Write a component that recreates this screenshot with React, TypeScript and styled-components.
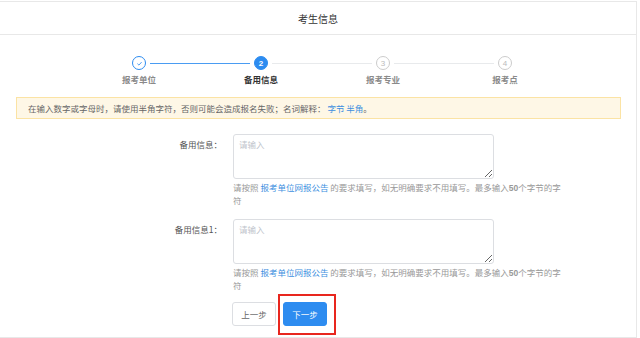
import React from "react";
import styled, { createGlobalStyle } from "styled-components";

const GlobalStyle = createGlobalStyle`
  html, body {
    margin: 0;
    padding: 0;
    background: #fff;
  }
  body {
    font-family: "Noto Sans CJK SC", "Noto Sans", "Liberation Sans", sans-serif;
    color: #515a6e;
  }
`;

const Page = styled.div`
  width: 636px;
  margin-top: 1px;
  border-top: 1px solid #e8e8e8;
  border-right: 1px solid #e8e8e8;
  border-bottom: 1px solid #e8e8e8;
  padding-bottom: 11px;
`;

const Header = styled.div`
  height: 32px;
  display: flex;
  align-items: center;
  justify-content: center;
  border-bottom: 1px solid #e8e8e8;
  font-size: 10px;
  color: #333;
`;

const Steps = styled.div`
  display: grid;
  grid-template-columns: repeat(4, 122px);
  margin: 21px 0 0 78px;
`;

const Step = styled.div<{ $line?: "done" | "todo" }>`
  position: relative;
  display: flex;
  flex-direction: column;
  align-items: center;

  &::after {
    content: "";
    display: ${(p) => (p.$line ? "block" : "none")};
    position: absolute;
    top: 7px;
    left: calc(50% + 11px);
    width: calc(100% - 22px);
    height: 1px;
    background: ${(p) => (p.$line === "done" ? "#4a9cf2" : "#e8eaec")};
  }
`;

const Circle = styled.div<{ $state: "done" | "active" | "wait" }>`
  width: 14px;
  height: 14px;
  box-sizing: border-box;
  border-radius: 50%;
  display: flex;
  align-items: center;
  justify-content: center;
  font-size: 8px;
  font-family: "Liberation Sans", sans-serif;
  font-weight: ${(p) => (p.$state === "active" ? 700 : 400)};
  border: 1px solid
    ${(p) => (p.$state === "wait" ? "#ccc" : "#2d8cf0")};
  background: ${(p) => (p.$state === "active" ? "#2d8cf0" : "#fff")};
  color: ${(p) =>
    p.$state === "active" ? "#fff" : p.$state === "done" ? "#2d8cf0" : "#bbb"};
`;

const StepLabel = styled.div<{ $active?: boolean }>`
  margin-top: 3px;
  font-size: 8.5px;
  line-height: 12px;
  font-weight: 700;
  color: ${(p) => (p.$active ? "#333" : "#8a8a8a")};
`;

const Alert = styled.div`
  margin: 12px 15px 0 16px;
  height: 22px;
  box-sizing: border-box;
  display: flex;
  align-items: center;
  padding-left: 11px;
  background: #fef7e6;
  border: 1px solid #fbe3a4;
  font-size: 8.5px;
  color: #666;
`;

const Link = styled.span`
  color: #3d8fe0;
`;

const Form = styled.div`
  margin-top: 15px;
  display: flex;
  flex-direction: column;
  gap: 13px;
`;

const Row = styled.div`
  display: flex;
`;

const Label = styled.div`
  width: 233px;
  box-sizing: border-box;
  padding: 4px 11px 0 0;
  text-align: right;
  font-size: 8.5px;
  line-height: 12px;
  color: #555;
`;

const Field = styled.div`
  display: flex;
  flex-direction: column;
`;

const TextArea = styled.textarea`
  width: 261px;
  height: 45px;
  box-sizing: border-box;
  margin: 0;
  padding: 3px 5px;
  border: 1px solid #dcdee2;
  border-radius: 3px;
  font-family: inherit;
  font-size: 8.5px;
  line-height: 12px;
  outline: none;

  &::placeholder {
    color: #c0c4cc;
  }
`;

const Help = styled.div`
  width: 334px;
  margin-top: 2px;
  font-size: 8.5px;
  line-height: 12px;
  color: #999;

  b {
    font-family: "Liberation Sans", sans-serif;
    font-weight: 700;
  }
`;

const Buttons = styled.div`
  display: flex;
  gap: 7px;
  margin: 11px 0 0 232px;
`;

const Button = styled.button<{ $primary?: boolean }>`
  position: relative;
  width: 44px;
  height: 24px;
  box-sizing: border-box;
  padding: 0;
  border-radius: 3px;
  font-family: inherit;
  font-size: 8.5px;
  border: 1px solid ${(p) => (p.$primary ? "#2d8cf0" : "#dcdee2")};
  background: ${(p) => (p.$primary ? "#2d8cf0" : "#fff")};
  color: ${(p) => (p.$primary ? "#fff" : "#666")};
`;

const Highlight = styled.span`
  position: absolute;
  left: -6px;
  top: -9px;
  width: 58px;
  height: 41px;
  box-sizing: border-box;
  border: 2px solid #e8261e;
  pointer-events: none;
`;

const Check = () => (
  <svg width="7" height="7" viewBox="0 0 10 10">
    <path d="M2 5.2 L4.2 7.3 L8 3" fill="none" stroke="#2d8cf0" strokeWidth="1.2" />
  </svg>
);

const steps = [
  { label: "报考单位", state: "done" as const, line: "done" as const },
  { label: "备用信息", state: "active" as const, line: "todo" as const },
  { label: "报考专业", state: "wait" as const, line: "todo" as const },
  { label: "报考点", state: "wait" as const, line: undefined },
];

const HelpText = () => (
  <Help>
    请按照 <Link>报考单位网报公告</Link> 的要求填写，如无明确要求不用填写。最多输入<b>50</b>个字节的字符
  </Help>
);

const App = () => {
  return (
    <>
      <GlobalStyle />
      <Page>
        <Header>考生信息</Header>

        <Steps>
          {steps.map((s, i) => (
            <Step key={s.label} $line={s.line}>
              <Circle $state={s.state}>{s.state === "done" ? <Check /> : i + 1}</Circle>
              <StepLabel $active={s.state === "active"}>{s.label}</StepLabel>
            </Step>
          ))}
        </Steps>

        <Alert>
          在输入数字或字母时，请使用半角字符，否则可能会造成报名失败；名词解释：&nbsp;<Link>字节 半角</Link>。
        </Alert>

        <Form>
          <Row>
            <Label>备用信息：</Label>
            <Field>
              <TextArea placeholder="请输入" />
              <HelpText />
            </Field>
          </Row>
          <Row>
            <Label>备用信息1：</Label>
            <Field>
              <TextArea placeholder="请输入" />
              <HelpText />
            </Field>
          </Row>
        </Form>

        <Buttons>
          <Button>上一步</Button>
          <Button $primary>
            下一步
            <Highlight />
          </Button>
        </Buttons>
      </Page>
    </>
  );
};

export default App;
